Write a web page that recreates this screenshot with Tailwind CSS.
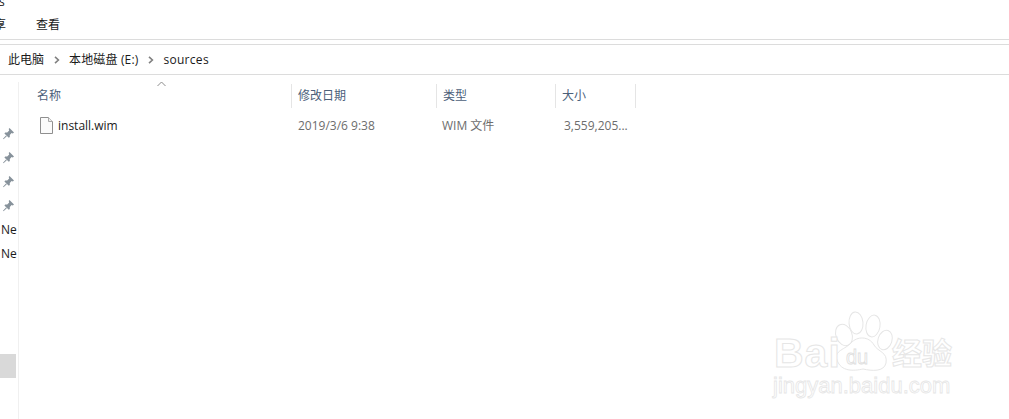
<!DOCTYPE html>
<html lang="zh">
<head>
    <meta charset="UTF-8">
    <title>sources</title>
    <script src="https://cdn.jsdelivr.net/npm/@tailwindcss/browser@4"></script>
</head>
<body class="relative w-[1009px] h-[419px] overflow-hidden bg-white text-[12px] text-[#1a1a1a] font-['Open_Sans','Noto_Sans_CJK_SC',sans-serif]">

    <!-- ribbon -->
    <div class="h-[40px] border-b border-[#dcdcdc] overflow-hidden">
        <div class="h-[6px] overflow-hidden text-[12px] leading-[6px] -ml-[1px]"><span class="block -mt-[6px] leading-[16px]">s</span></div>
        <div class="flex items-center h-[16px] mt-[11px] -ml-[6px]">
            <span class="w-[42px]">享</span>
            <span>查看</span>
        </div>
    </div>

    <!-- address bar -->
    <div class="mt-[4px] h-[31px] border-y border-[#dcdcdc] flex items-center pl-[8px]">
        <span>此电脑</span>
        <svg class="ml-[9px] mr-[8px]" width="8" height="8" viewBox="0 0 8 8"><path d="M2 0.8 L5.4 4 L2 7.2" fill="none" stroke="#808080" stroke-width="1.6"/></svg>
        <span class="tracking-[0.15px]">本地磁盘 (E:)</span>
        <svg class="ml-[9px] mr-[8px]" width="8" height="8" viewBox="0 0 8 8"><path d="M2 0.8 L5.4 4 L2 7.2" fill="none" stroke="#808080" stroke-width="1.6"/></svg>
        <span class="tracking-[0.3px]">sources</span>
    </div>

    <div class="flex mt-[7px]">
        <!-- nav pane -->
        <div class="w-[19px] h-[337px] border-r border-[#f0f0f0] pt-[40px] shrink-0 overflow-hidden">
            <div class="h-[24px] flex items-center pl-[2px]"><svg class="-mt-[1px]" width="13" height="13" viewBox="0 0 13 13"><path d="M7.5 1 L12 5.5 L10.8 6.4 L9.6 6 L7.8 8 L7.8 10 L6.8 10.8 L2.4 6.4 L3.2 5.4 L5.2 5.4 L7.2 3.4 L6.7 2 Z M4 8.4 L4.8 9.2 L1.5 12.2 L1 11.8 Z" fill="#87929b"/></svg></div>
            <div class="h-[24px] flex items-center pl-[2px]"><svg class="-mt-[1px]" width="13" height="13" viewBox="0 0 13 13"><path d="M7.5 1 L12 5.5 L10.8 6.4 L9.6 6 L7.8 8 L7.8 10 L6.8 10.8 L2.4 6.4 L3.2 5.4 L5.2 5.4 L7.2 3.4 L6.7 2 Z M4 8.4 L4.8 9.2 L1.5 12.2 L1 11.8 Z" fill="#87929b"/></svg></div>
            <div class="h-[24px] flex items-center pl-[2px]"><svg class="-mt-[1px]" width="13" height="13" viewBox="0 0 13 13"><path d="M7.5 1 L12 5.5 L10.8 6.4 L9.6 6 L7.8 8 L7.8 10 L6.8 10.8 L2.4 6.4 L3.2 5.4 L5.2 5.4 L7.2 3.4 L6.7 2 Z M4 8.4 L4.8 9.2 L1.5 12.2 L1 11.8 Z" fill="#87929b"/></svg></div>
            <div class="h-[24px] flex items-center pl-[2px]"><svg class="-mt-[1px]" width="13" height="13" viewBox="0 0 13 13"><path d="M7.5 1 L12 5.5 L10.8 6.4 L9.6 6 L7.8 8 L7.8 10 L6.8 10.8 L2.4 6.4 L3.2 5.4 L5.2 5.4 L7.2 3.4 L6.7 2 Z M4 8.4 L4.8 9.2 L1.5 12.2 L1 11.8 Z" fill="#87929b"/></svg></div>
            <div class="h-[24px] flex items-center pl-[1px]">Ne</div>
            <div class="h-[24px] flex items-center pl-[1px]">Ne</div>
            <div class="mt-[88px] w-[16px] h-[24px] bg-[#d9d9d9]"></div>
        </div>

        <!-- file list -->
        <div class="flex-1">
            <div class="relative flex h-[26px] pt-[2px] items-center text-[#4c607a]">
                <svg class="absolute left-[138px] -top-[1px]" width="9" height="6" viewBox="0 0 9 6"><path d="M0.5 5 L4.5 1 L8.5 5" fill="none" stroke="#8c8c8c"/></svg>
                <div class="w-[273px] h-full pl-[18px] flex items-center border-r border-[#e5e5e5]">名称</div>
                <div class="w-[145px] h-full pl-[6px] flex items-center border-r border-[#e5e5e5]">修改日期</div>
                <div class="w-[119px] h-full pl-[6px] flex items-center border-r border-[#e5e5e5]">类型</div>
                <div class="w-[80px] h-full pl-[6px] flex items-center border-r border-[#e5e5e5]">大小</div>
            </div>
            <div class="flex h-[22px] mt-[7px] items-center text-[#6d6d6d]">
                <div class="w-[273px] pl-[21px] flex items-center gap-[5px] text-[#1a1a1a]">
                    <svg class="-mt-[1px]" width="13" height="17" viewBox="0 0 13 17"><path d="M0.5 0.5 H8.5 L12.5 4.5 V16.5 H0.5 Z" fill="#fbfbfb" stroke="#8f8f8f"/><path d="M8.5 0.5 V4.5 H12.5" fill="#eeeeee" stroke="#a8a8a8"/></svg>
                    <span>install.wim</span>
                </div>
                <div class="w-[145px] pl-[6px]">2019/3/6 9:38</div>
                <div class="w-[119px] pl-[5px]">WIM 文件</div>
                <div class="w-[80px] pl-[8px]">3,559,205...</div>
            </div>
        </div>
    </div>

    <!-- watermark -->
    <div class="absolute left-[770px] top-[305px] w-[190px] h-[100px] text-white font-['Liberation_Sans','Noto_Sans_CJK_SC',sans-serif] [-webkit-text-stroke:1px_#e6e6e6]">
        <svg class="absolute left-0 top-0" width="190" height="70" viewBox="0 0 190 70">
            <g fill="#fff" stroke="#e6e6e6" stroke-width="1">
                <ellipse cx="74" cy="30" rx="8" ry="11" transform="rotate(-22 74 30)"/>
                <ellipse cx="86" cy="18" rx="7" ry="11" transform="rotate(-5 86 18)"/>
                <ellipse cx="103" cy="21" rx="7" ry="11" transform="rotate(10 103 21)"/>
                <ellipse cx="115" cy="35" rx="7" ry="10" transform="rotate(18 115 35)"/>
                <path d="M67 55 C63 46 76 44 81 38 C87 31 99 31 104 40 C108 47 118 47 116 58 C114 67 102 66 93 64 C84 66 71 67 67 55 Z"/>
            </g>
        </svg>
        <span class="absolute left-[4px] top-[28px] text-[41px] leading-[40px] font-bold tracking-[1px]">Bai</span>
        <span class="absolute left-[76px] top-[42px] text-[20px] leading-[20px] [-webkit-text-stroke:0.8px_#dedede]">du</span>
        <span class="absolute left-[122px] top-[33px] text-[30px] leading-[32px] font-bold">经验</span>
        <span class="absolute left-[3px] top-[69px] text-[22px] leading-[24px] [-webkit-text-stroke:0.8px_#e6e6e6]">jingyan.baidu.com</span>
    </div>
</body>
</html>
